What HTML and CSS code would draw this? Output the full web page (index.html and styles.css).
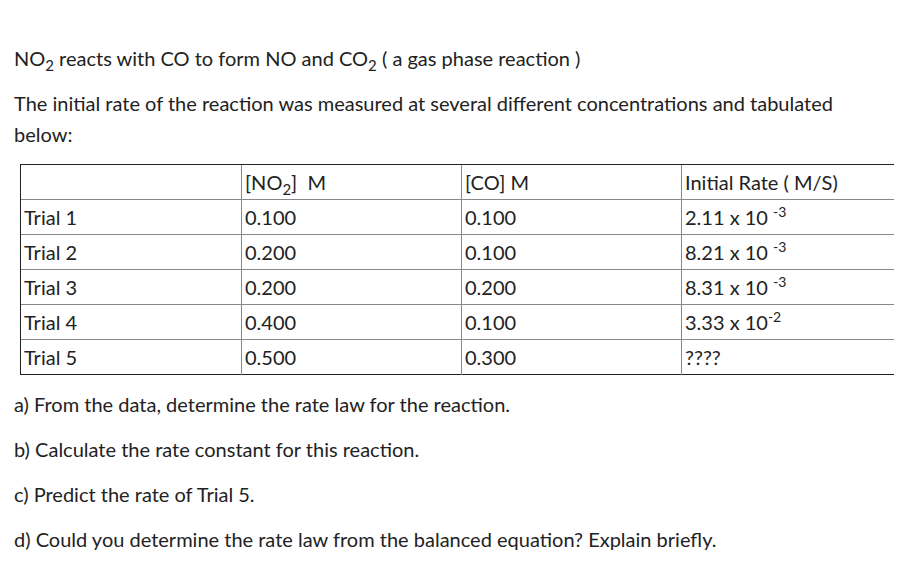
FILE: index.html
```html
<!DOCTYPE html>
<html>
<head>
<meta charset="utf-8">
<link rel="stylesheet" href="styles.css">
</head>
<body>
<div class="page">
  <p class="line title">NO<sub>2</sub> reacts with CO to form NO and CO<sub>2</sub> ( a gas phase reaction )</p>
  <p class="line intro">The initial rate of the reaction was measured at several different concentrations and tabulated below:</p>
  <table class="data">
    <tr><td></td><td>[NO<sub>2</sub>]&nbsp; M</td><td>[CO] M</td><td>Initial Rate ( M/S)</td></tr>
    <tr><td>Trial 1</td><td>0.100</td><td>0.100</td><td>2.11 x 10 <sup>-3</sup></td></tr>
    <tr><td>Trial 2</td><td>0.200</td><td>0.100</td><td>8.21 x 10 <sup>-3</sup></td></tr>
    <tr><td>Trial 3</td><td>0.200</td><td>0.200</td><td>8.31 x 10 <sup>-3</sup></td></tr>
    <tr><td>Trial 4</td><td>0.400</td><td>0.100</td><td>3.33 x 10<sup>-2</sup></td></tr>
    <tr><td>Trial 5</td><td>0.500</td><td>0.300</td><td>????</td></tr>
  </table>
  <p class="line">a) From the data, determine the rate law for the reaction.</p>
  <p class="line">b) Calculate the rate constant for this reaction.</p>
  <p class="line">c) Predict the rate of Trial 5.</p>
  <p class="line">d) Could you determine the rate law from the balanced equation? Explain briefly.</p>
</div>
</body>
</html>
```
FILE: styles.css
```css
html, body {
  margin: 0;
  background: #fff;
}
.page {
  padding: 29px 0 0 14px;
  font-family: Lato, "Noto Sans", sans-serif;
  font-size: 20px;
  color: #222;
}
.line {
  margin: 14px 0 0;
  line-height: 31px;
}
.intro {
  max-width: 840px;
}
sub {
  font-size: 0.75em;
  vertical-align: -0.3em;
  line-height: 0;
}
sup {
  font-size: 0.7em;
  vertical-align: 0.55em;
  line-height: 0;
}
.data {
  margin: 14px 0 0 6px;
  border-collapse: collapse;
  border-top: 1px solid #222;
  border-left: 1px solid #222;
  border-bottom: 1px solid #222;
  font-size: 20px;
}
.data td {
  border-top: 1px solid #888;
  border-left: 1px solid #888;
  height: 35px;
  padding: 0 0 0 3px;
  box-sizing: border-box;
  vertical-align: middle;
  white-space: nowrap;
}
.data td:nth-child(1) { width: 221px; }
.data td:nth-child(2) { width: 220px; }
.data td:nth-child(3) { width: 220px; }
.data td:nth-child(4) { width: 212px; }
.data tr:first-child td { border-top: 1px solid #222; }
.data td:first-child { border-left: 1px solid #222; }
```
